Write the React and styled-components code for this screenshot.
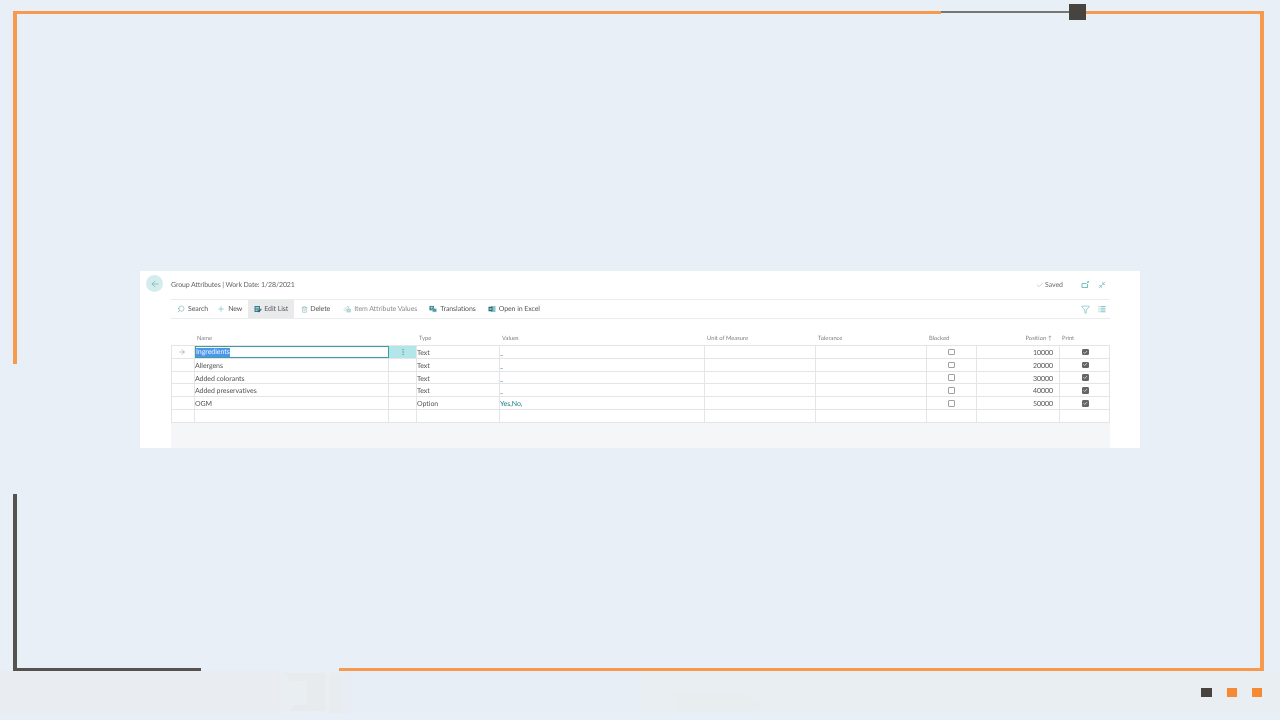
import React from "react";
import styled, { createGlobalStyle } from "styled-components";
import { ArrowLeft, ArrowRight, Check, EllipsisVertical, Funnel, Minimize2, Plus, Search, Trash2 } from "lucide-react";

const GlobalStyle = createGlobalStyle`
    html, body {
        margin: 0;
        padding: 0;
        background: #e8eff6;
        font-family: "Lato", "Open Sans", sans-serif;
        text-rendering: geometricPrecision;
    }
`;

const Page = styled.div`
    position: relative;
    width: 1280px;
    height: 720px;
    overflow: hidden;
    background: #e8eff6;
`;

const Stage = styled.main`
    height: 671px;
    box-sizing: border-box;
    padding: 271px 140px 0;
`;

const FrameLine = styled.div`
    position: absolute;
    background: #f79a4e;
`;

const TopOrangeLeft = styled(FrameLine)`
    left: 13px;
    top: 11px;
    width: 928px;
    height: 3px;
`;

const TopThinLine = styled(FrameLine)`
    left: 941px;
    top: 11px;
    width: 128px;
    height: 2px;
    background: #77766f;
`;

const TopSquare = styled(FrameLine)`
    left: 1069px;
    top: 4px;
    width: 17px;
    height: 16px;
    background: #47433e;
`;

const TopOrangeRight = styled(FrameLine)`
    left: 1086px;
    top: 11px;
    width: 177px;
    height: 3px;
`;

const RightLine = styled(FrameLine)`
    left: 1260px;
    top: 11px;
    width: 3.5px;
    height: 660px;
`;

const LeftOrange = styled(FrameLine)`
    left: 13px;
    top: 11px;
    width: 4px;
    height: 353px;
`;

const LeftDark = styled(FrameLine)`
    left: 13px;
    top: 494px;
    width: 3.5px;
    height: 177px;
    background: #55534f;
`;

const BottomDark = styled(FrameLine)`
    left: 13px;
    top: 668px;
    width: 188px;
    height: 3px;
    background: #55534f;
`;

const BottomOrange = styled(FrameLine)`
    left: 339px;
    top: 668px;
    width: 924px;
    height: 3px;
`;

const Band = styled.footer`
    position: relative;
    height: 42px;
    background: #e9eef3;
    display: flex;
    justify-content: flex-end;
    align-items: center;
    gap: 15px;
    padding-right: 18px;
    box-sizing: border-box;
`;

const Watermark = styled.svg`
    position: absolute;
    left: 0;
    top: 0;
`;

const Dot = styled.span`
    position: relative;
    width: ${(p) => (p.$dark ? "11px" : "10px")};
    height: 9px;
    background: ${(p) => (p.$dark ? "#47433e" : "#f58a33")};
`;

const Card = styled.section`
    display: flex;
    width: 1000px;
    height: 177px;
    background: #ffffff;
    color: #555555;
    font-size: 7px;
    letter-spacing: -0.05px;
    filter: blur(0.35px);
`;

const Gutter = styled.div`
    width: 31px;
    flex: none;
    padding: 4px 0 0 6px;
    box-sizing: border-box;
`;

const BackButton = styled.button`
    width: 17px;
    height: 17px;
    padding: 0;
    border: 0;
    border-radius: 50%;
    background: #d3edef;
    color: #5c8f93;
    display: flex;
    align-items: center;
    justify-content: center;
`;

const Content = styled.div`
    width: 939px;
    display: flex;
    flex-direction: column;
`;

const TitleRow = styled.header`
    height: 28px;
    display: flex;
    align-items: center;
    justify-content: space-between;
    box-sizing: border-box;
    color: #666666;
`;

const Title = styled.span`
    font-size: 7px;
    letter-spacing: -0.13px;
`;

const TitleTools = styled.div`
    display: flex;
    align-items: center;
    padding-right: 4px;
    color: #2b9ca3;
`;

const Saved = styled.span`
    display: flex;
    align-items: center;
    gap: 1px;
    color: #707070;
    margin-right: 18px;
`;

const Toolbar = styled.nav`
    height: 20px;
    display: flex;
    align-items: stretch;
    box-sizing: border-box;
    border-top: 1.5px solid #ebeded;
    border-bottom: 1.5px solid #ebeded;
    letter-spacing: -0.08px;
`;

const ToolButton = styled.div`
    display: flex;
    align-items: center;
    gap: ${(p) => (p.$active ? "2px" : "3px")};
    padding: 0 6px;
    white-space: nowrap;
    color: ${(p) => (p.$muted ? "#8f8f8f" : "#585858")};
    background: ${(p) => (p.$active ? "#e8eaeb" : "transparent")};
    svg {
        flex: none;
    }
`;

const SearchButton = styled(ToolButton)`
    padding-right: 3px;
`;

const DeleteButton = styled(ToolButton)`
    gap: 2px;
    margin-left: 1px;
    margin-right: 1px;
`;

const ToolEnd = styled.div`
    margin-left: auto;
    display: flex;
    align-items: center;
    gap: 8px;
    padding-right: 4px;
    color: #2b9ca3;
`;

const HeadRow = styled.div`
    display: grid;
    grid-template-columns: 23px 194px 28px 83px 205px 111px 111px 50px 83px 51px;
    height: 26px;
    padding-top: 16px;
    box-sizing: border-box;
    font-size: 5.8px;
    letter-spacing: 0;
    color: #808080;
`;

const HeadCell = styled.span`
    padding: 0 3px;
    text-align: ${(p) => (p.$right ? "right" : "left")};
    padding-right: ${(p) => (p.$right ? "7px" : "3px")};
    line-height: 8px;
`;

const Rows = styled.div`
    border-top: 1px solid #e3e5e6;
`;

const Row = styled.div`
    display: grid;
    grid-template-columns: 23px 194px 28px 83px 205px 111px 111px 50px 83px 51px;
    height: 12.83px;
    box-sizing: border-box;
    border-bottom: 1px solid #e3e5e6;
    border-left: 1px solid #e3e5e6;
    border-right: 1px solid #e3e5e6;
`;

const Cell = styled.div`
    display: flex;
    align-items: center;
    justify-content: ${(p) => p.$justify || "flex-start"};
    box-sizing: border-box;
    padding: ${(p) => (p.$justify === "flex-end" ? "2px 6px 0 0" : p.$justify === "center" ? "0" : "2px 0 0 0")};
    border-right: 1px solid #e3e5e6;
    line-height: 10px;
    color: ${(p) => (p.$link ? "#1a7f86" : "#555555")};
    &:last-child {
        border-right: 0;
    }
`;

const ArrowCell = styled(Cell)`
    justify-content: center;
    padding: 0 2px 0 0;
    color: #666666;
`;

const EditCell = styled(Cell)`
    border: 1px solid #3f9ea3;
    height: 12.83px;
    margin-top: -0.5px;
    padding: 1px 0 0 0;
    background: #ffffff;
`;

const Selected = styled.span`
    background: #4d97e8;
    color: #e8f2ff;
    line-height: 9px;
`;

const MenuCell = styled(Cell)`
    justify-content: center;
    background: #b3e6e9;
    color: #6a8b8d;
    padding: 0;
`;

const Box = styled.span`
    width: 6.5px;
    height: 6.5px;
    box-sizing: border-box;
    border-radius: 1px;
    display: flex;
    align-items: center;
    justify-content: center;
    color: #ffffff;
    border: 1px solid ${(p) => (p.$checked ? "#666666" : "#a0a0a0")};
    background: ${(p) => (p.$checked ? "#666666" : "#ffffff")};
`;

const Tray = styled.div`
    flex: 1;
    background: #f4f6f8;
`;

const SearchGlyph = styled(Search)`
    transform: scaleX(-1);
    color: #3f8f96;
`;

const CollapseGlyph = styled(Minimize2)`
    margin-left: 8px;
`;

const EditListIcon = () => (
    <svg width="8" height="8" viewBox="0 0 16 16">
        <rect x="1" y="2" width="11" height="12" fill="#2f7f8c" />
        <path d="M3 5h7M3 8h7M3 11h4" stroke="#ffffff" strokeWidth="1.2" />
        <path d="M9 13l5-6 1.5 1.5-5 6H9z" fill="#555555" />
    </svg>
);

const AttributeIcon = () => (
    <svg width="8" height="8" viewBox="0 0 16 16" fill="none" stroke="#9cc7c9" strokeWidth="1.3">
        <path d="M2 9l6-6h3v3l-6 6z" />
        <rect x="8" y="8" width="7" height="6" fill="#c8dfe0" />
    </svg>
);

const TranslationsIcon = () => (
    <svg width="8" height="8" viewBox="0 0 18 16">
        <rect x="1" y="1" width="10" height="10" fill="#2f7f8c" />
        <path d="M3 4h6M6 4v5" stroke="#ffffff" strokeWidth="1.3" />
        <rect x="8" y="7" width="9" height="8" fill="#79b7bd" />
        <path d="M10 13l2.5-5 2.5 5" stroke="#24555c" strokeWidth="1.3" fill="none" />
    </svg>
);

const ExcelIcon = () => (
    <svg width="8" height="8" viewBox="0 0 16 16">
        <rect x="6" y="2" width="9" height="12" fill="#8fc2c6" />
        <rect x="1" y="3.5" width="8" height="9" fill="#1f6f78" />
        <path d="M3 6l4 4M7 6l-4 4" stroke="#ffffff" strokeWidth="1.2" />
    </svg>
);

const OpenIcon = () => (
    <svg width="9" height="8" viewBox="0 0 18 16" fill="none" stroke="currentColor" strokeWidth="1.3">
        <path d="M13 6v7H2V5h9" />
        <path d="M12 4l3-3M13 1h2v2" />
    </svg>
);

const ListIcon = () => (
    <svg width="8" height="8" viewBox="0 0 16 16" stroke="currentColor" strokeWidth="1.6" opacity="0.7">
        <path d="M1 3h2M5 3h10M1 6.5h2M5 6.5h10M1 10h2M5 10h10M1 13.5h2M5 13.5h10" />
    </svg>
);

const heads = [
    { label: "" },
    { label: "Name" },
    { label: "" },
    { label: "Type" },
    { label: "Values" },
    { label: "Unit of Measure" },
    { label: "Tolerance" },
    { label: "Blocked" },
    { label: "Position ↑", right: true },
    { label: "Print" },
];

const rows = [
    { name: "Ingredients", type: "Text", values: "_", position: "10000" },
    { name: "Allergens", type: "Text", values: "_", position: "20000" },
    { name: "Added colorants", type: "Text", values: "_", position: "30000" },
    { name: "Added preservatives", type: "Text", values: "_", position: "40000" },
    { name: "OGM", type: "Option", values: "Yes,No,", position: "50000" },
];

function DataRow({ row, active }) {
    return (
        <Row>
            {active ? (
                <ArrowCell>
                    <ArrowRight size={8} strokeWidth={1.2} />
                </ArrowCell>
            ) : (
                <Cell />
            )}
            {active ? (
                <EditCell>
                    <Selected>{row.name}</Selected>
                </EditCell>
            ) : (
                <Cell>{row.name}</Cell>
            )}
            {active ? (
                <MenuCell>
                    <EllipsisVertical size={8} strokeWidth={1.6} />
                </MenuCell>
            ) : (
                <Cell />
            )}
            <Cell>{row.type}</Cell>
            <Cell $link>{row.values}</Cell>
            <Cell />
            <Cell />
            <Cell $justify="center">
                <Box />
            </Cell>
            <Cell $justify="flex-end">{row.position}</Cell>
            <Cell $justify="center">
                <Box $checked>
                    <Check size={5} strokeWidth={3.5} />
                </Box>
            </Cell>
        </Row>
    );
}

function EmptyRow() {
    return (
        <Row>
            {heads.map((h, i) => (
                <Cell key={i} />
            ))}
        </Row>
    );
}

export default function App() {
    return (
        <Page>
            <GlobalStyle />
            <Stage>
                <Card>
                    <Gutter>
                        <BackButton>
                            <ArrowLeft size={10} strokeWidth={1.2} />
                        </BackButton>
                    </Gutter>
                    <Content>
                        <TitleRow>
                            <Title>Group Attributes | Work Date: 1/28/2021</Title>
                            <TitleTools>
                                <Saved>
                                    <Check size={8} strokeWidth={1} />
                                    Saved
                                </Saved>
                                <OpenIcon />
                                <CollapseGlyph size={8} strokeWidth={1.3} />
                            </TitleTools>
                        </TitleRow>
                        <Toolbar>
                            <SearchButton>
                                <SearchGlyph size={8} strokeWidth={1.3} />
                                Search
                            </SearchButton>
                            <ToolButton>
                                <Plus size={8} strokeWidth={1.3} color="#2b9ca3" />
                                New
                            </ToolButton>
                            <ToolButton $active>
                                <EditListIcon />
                                Edit List
                            </ToolButton>
                            <DeleteButton>
                                <Trash2 size={7} strokeWidth={1.5} color="#6fa6aa" />
                                Delete
                            </DeleteButton>
                            <ToolButton $muted>
                                <AttributeIcon />
                                Item Attribute Values
                            </ToolButton>
                            <ToolButton>
                                <TranslationsIcon />
                                Translations
                            </ToolButton>
                            <ToolButton>
                                <ExcelIcon />
                                Open in Excel
                            </ToolButton>
                            <ToolEnd>
                                <Funnel size={9} strokeWidth={1.2} />
                                <ListIcon />
                            </ToolEnd>
                        </Toolbar>
                        <HeadRow>
                            {heads.map((h, i) => (
                                <HeadCell key={i} $right={h.right}>
                                    {h.label}
                                </HeadCell>
                            ))}
                        </HeadRow>
                        <Rows>
                            {rows.map((row, i) => (
                                <DataRow key={row.name} row={row} active={i === 0} />
                            ))}
                            <EmptyRow />
                        </Rows>
                        <Tray />
                    </Content>
                </Card>
            </Stage>
            <Band>
                <Watermark width="1280" height="42" viewBox="0 0 1280 42">
                    <path d="M0 0H280V42H0z" fill="#e9edf1" />
                    <path d="M285 2h40v38h-36l6-6h12V10h-16z" fill="#e7ebed" />
                    <path d="M330 2h22v40h-22z" fill="#e8ecef" />
                    <path d="M340 0H640V42H340z" fill="#e7eef5" opacity="0.7" />
                    <path d="M675 22h70l5 6 14 2-8 10h-80z" fill="#e8edef" />
                </Watermark>
                <Dot $dark />
                <Dot />
                <Dot />
            </Band>
            <TopOrangeLeft />
            <TopThinLine />
            <TopSquare />
            <TopOrangeRight />
            <RightLine />
            <LeftOrange />
            <LeftDark />
            <BottomDark />
            <BottomOrange />
        </Page>
    );
}
